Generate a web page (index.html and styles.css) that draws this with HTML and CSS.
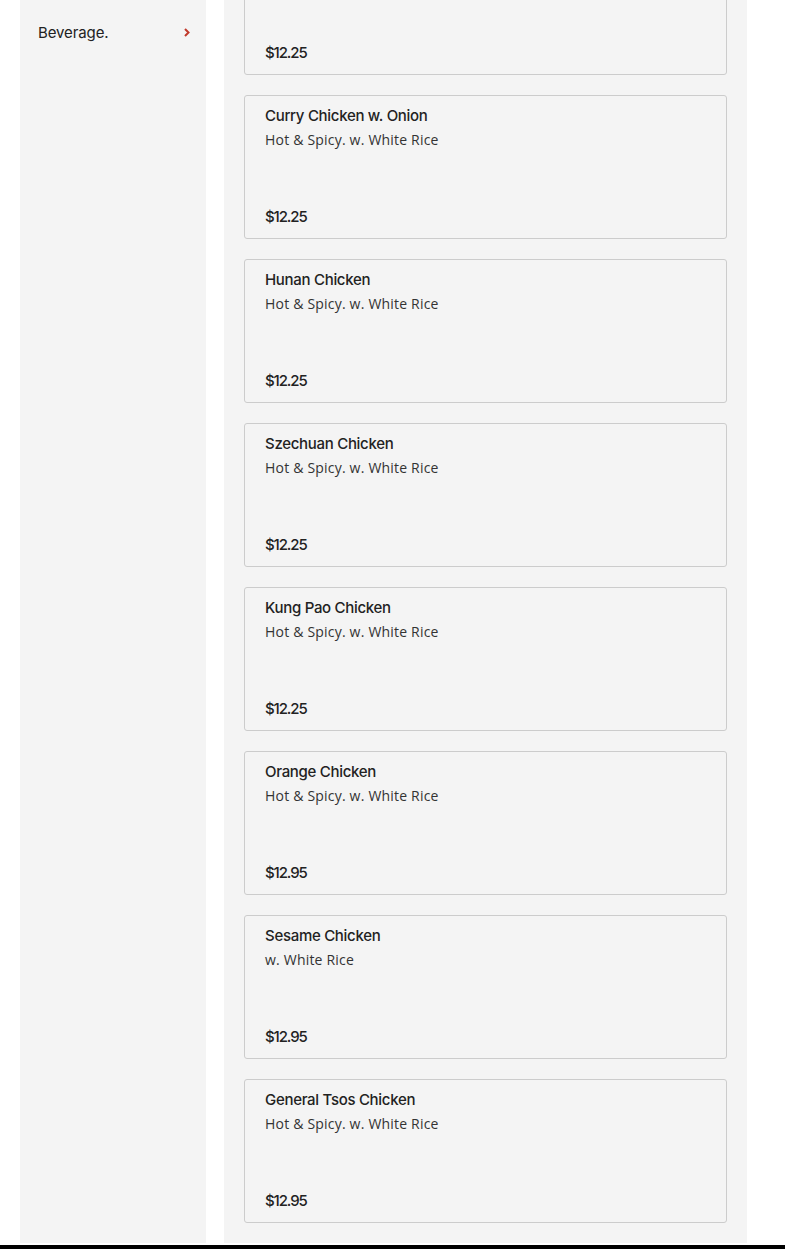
FILE: index.html
```html
<!DOCTYPE html>
<html>
<head>
    <title>Menu</title>
    <link rel="stylesheet" href="styles.css">
</head>
<body>
    <div class="page">
        <!-- Category Sidebar -->
        <div class="sidebar">
            <a class="cat-link" href="#">
                <span>Beverage.</span>
                <svg class="chevron" width="6" height="9" viewBox="0 0 6 9"><path d="M1 1 L4.5 4.5 L1 8" fill="none" stroke="#c0392b" stroke-width="2"/></svg>
            </a>
        </div>

        <!-- Menu Items -->
        <div class="menu-panel">
            <div class="item-list">
                <div class="item-card">
                    <p class="item-price">$12.25</p>
                </div>
                <div class="item-card">
                    <h4 class="item-name">Curry Chicken w. Onion</h4>
                    <p class="item-desc">Hot &amp; Spicy. w. White Rice</p>
                    <p class="item-price">$12.25</p>
                </div>
                <div class="item-card">
                    <h4 class="item-name">Hunan Chicken</h4>
                    <p class="item-desc">Hot &amp; Spicy. w. White Rice</p>
                    <p class="item-price">$12.25</p>
                </div>
                <div class="item-card">
                    <h4 class="item-name">Szechuan Chicken</h4>
                    <p class="item-desc">Hot &amp; Spicy. w. White Rice</p>
                    <p class="item-price">$12.25</p>
                </div>
                <div class="item-card">
                    <h4 class="item-name">Kung Pao Chicken</h4>
                    <p class="item-desc">Hot &amp; Spicy. w. White Rice</p>
                    <p class="item-price">$12.25</p>
                </div>
                <div class="item-card">
                    <h4 class="item-name">Orange Chicken</h4>
                    <p class="item-desc">Hot &amp; Spicy. w. White Rice</p>
                    <p class="item-price">$12.95</p>
                </div>
                <div class="item-card">
                    <h4 class="item-name">Sesame Chicken</h4>
                    <p class="item-desc">w. White Rice</p>
                    <p class="item-price">$12.95</p>
                </div>
                <div class="item-card">
                    <h4 class="item-name">General Tsos Chicken</h4>
                    <p class="item-desc">Hot &amp; Spicy. w. White Rice</p>
                    <p class="item-price">$12.95</p>
                </div>
            </div>
        </div>
    </div>

    <div class="footer"></div>
</body>
</html>
```

FILE: styles.css
```css
:root {
    --panel: #f4f4f4;
    --border: #cccccc;
    --text: #222222;
    --accent: #c0392b;
}

* {
    margin: 0;
    padding: 0;
    box-sizing: border-box;
}

body {
    font-family: "Open Sans", Arial, sans-serif;
    background-color: #ffffff;
    color: var(--text);
}

.page {
    display: flex;
    gap: 18px;
    padding: 0 38px 0 20px;
    height: 1243px;
}

/* Sidebar */
.sidebar {
    width: 186px;
    background-color: var(--panel);
    padding: 23px 16px 0 18px;
}

.cat-link {
    display: flex;
    align-items: center;
    justify-content: space-between;
    color: var(--text);
    text-decoration: none;
    font-family: Inter, Arial, sans-serif;
    font-size: 15px;
    line-height: 20px;
    letter-spacing: -0.1px;
}

.chevron {
    margin-top: -2px;
}

/* Menu panel */
.menu-panel {
    flex: 1;
    background-color: var(--panel);
    padding: 0 20px;
    overflow: hidden;
}

.item-list {
    display: flex;
    flex-direction: column;
    gap: 20px;
    margin-top: -69px;
}

.item-card {
    height: 144px;
    border: 1px solid var(--border);
    border-radius: 3px;
    padding: 10px 20px 11px;
    display: flex;
    flex-direction: column;
}

.item-name {
    font-family: Inter, Arial, sans-serif;
    font-weight: 500;
    font-size: 15px;
    line-height: 20px;
    letter-spacing: -0.3px;
}

.item-desc {
    font-size: 14px;
    line-height: 28px;
    letter-spacing: 0.2px;
    color: #333333;
}

.item-price {
    margin-top: auto;
    font-family: Inter, Arial, sans-serif;
    font-weight: 500;
    font-size: 15px;
    line-height: 20px;
    letter-spacing: -1.1px;
}

.footer {
    margin-top: 2px;
    height: 40px;
    background-color: #000000;
}
```
